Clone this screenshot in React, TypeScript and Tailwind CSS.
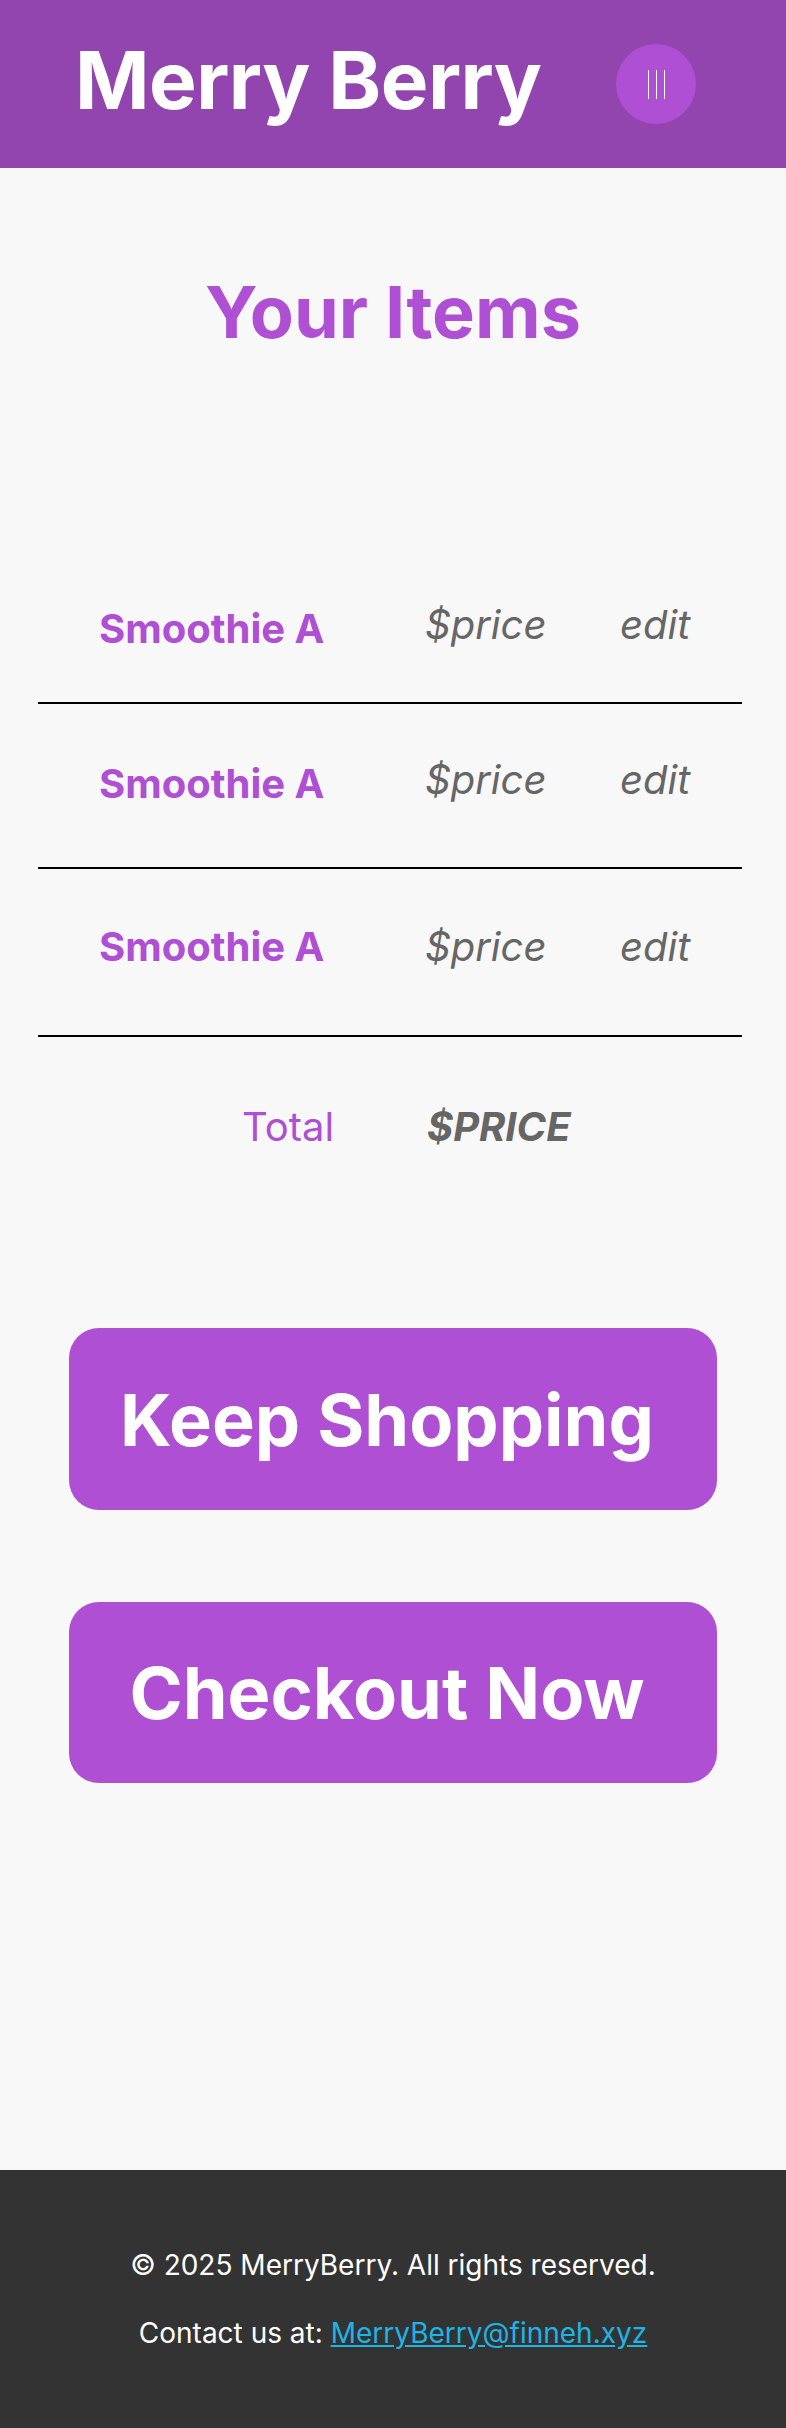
import React from "react";

const items = [
  { name: "Smoothie A", price: "$price", row: "pt-[50px] pb-[53px]", nudge: "translate-y-[4px]" },
  { name: "Smoothie A", price: "$price", row: "pt-[51px] pb-[63px]", nudge: "translate-y-[4px]" },
  { name: "Smoothie A", price: "$price", row: "pt-[53px] pb-[64px]", nudge: "" },
];

const App: React.FC = () => {
  return (
    <div
      className="min-h-screen flex flex-col bg-[#f8f8f8] leading-[normal]"
      style={{ fontFamily: "Inter, 'Noto Sans', sans-serif" }}
    >
      <header className="h-[168px] bg-[#9245ae] flex items-center pl-[75px]">
        <h1 className="text-[80px] font-bold text-white mb-[10px] tracking-[-0.5px]">
          Merry Berry
        </h1>
        <button className="ml-auto mr-[90px] w-20 h-20 rounded-full bg-[#ae4fd4] flex items-center justify-center gap-[7px]">
          <span className="w-px h-[29px] bg-white" />
          <span className="w-px h-[29px] bg-white" />
          <span className="w-px h-[29px] bg-white" />
        </button>
      </header>

      <main className="flex-1">
        <h2 className="mt-[100px] text-center text-[72px] font-bold text-[#ae4fd4]">
          Your Items
        </h2>

        <div className="mt-[195px] ml-[38px] mr-[44px]">
          {items.map((item, i) => (
            <div
              key={i}
              className={`flex items-center border-b-2 border-black ${item.row}`}
            >
              <span
                className={`ml-[61px] w-[326px] text-[40px] font-bold text-[#ae4fd4] ${item.nudge}`}
              >
                {item.name}
              </span>
              <span className="w-[195px] text-[40px] italic text-[#666666]">
                {item.price}
              </span>
              <span className="text-[40px] italic text-[#666666]">edit</span>
            </div>
          ))}
          <div className="flex items-center pt-[65px]">
            <span className="ml-[204px] w-[185px] text-[40px] text-[#ae4fd4]">
              Total
            </span>
            <span className="text-[40px] font-bold italic text-[#666666]">
              $PRICE
            </span>
          </div>
        </div>

        <div className="mt-[177px] flex flex-col items-center gap-[92px]">
          <button className="w-[648px] h-[182px] pr-[12px] rounded-[30px] bg-[#ae4fd4] text-white text-[72px] font-bold">
            Keep Shopping
          </button>
          <button className="w-[648px] h-[181px] pr-[12px] rounded-[30px] bg-[#ae4fd4] text-white text-[72px] font-bold">
            Checkout Now
          </button>
        </div>
      </main>

      <footer className="bg-[#333333] text-white text-center text-[28px] py-[78px]">
        <p>© 2025 MerryBerry. All rights reserved.</p>
        <p className="mt-[34px]">
          Contact us at:{" "}
          <a href="#" className="text-[#1eb4e6] underline">
            MerryBerry@finneh.xyz
          </a>
        </p>
      </footer>
    </div>
  );
};

export default App;
